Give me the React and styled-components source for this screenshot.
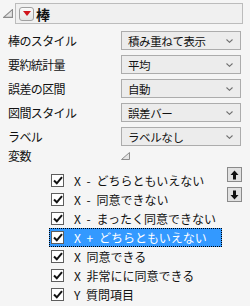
import React from "react";
import styled, { createGlobalStyle } from "styled-components";

const GlobalStyle = createGlobalStyle`
  body {
    margin: 0;
    background: #f5f5f5;
    font-family: "Noto Sans CJK JP", "Noto Sans", sans-serif;
    color: #111;
  }
`;

const Panel = styled.div`
  width: 250px;
  height: 306px;
  padding-top: 3px;
  box-sizing: border-box;
`;

const Header = styled.div`
  display: flex;
  align-items: center;
  padding-left: 3px;
`;

const HeaderBox = styled.div`
  display: flex;
  align-items: center;
  gap: 2px;
  margin-left: 2px;
  width: 228px;
  height: 21px;
  box-sizing: border-box;
  border: 1px solid #bcbcbc;
  background: #f0f0f0;
  padding-left: 3px;
`;

const RedButton = styled.div`
  display: flex;
  align-items: center;
  justify-content: center;
  width: 15px;
  height: 14px;
  box-sizing: border-box;
  border: 1px solid #a0a0a0;
  border-radius: 3px;
  background: linear-gradient(#fafafa, #e4e4e4);
`;

const Title = styled.span`
  font-size: 14px;
  font-weight: 700;
  line-height: 14px;
`;

const Form = styled.div`
  display: grid;
  grid-template-columns: 113px 120px;
  grid-auto-rows: 19px;
  row-gap: 5px;
  padding-left: 8px;
  margin-top: 7px;
  align-items: center;
  font-size: 12px;
`;

const Label = styled.span`
  font-size: 12px;
  letter-spacing: -0.6px;
  line-height: 16px;
`;

const Select = styled.div`
  display: flex;
  align-items: center;
  justify-content: space-between;
  height: 19px;
  box-sizing: border-box;
  border: 1px solid #acacac;
  background: #ececec;
  padding: 0 7px 0 6px;
  font-size: 11.5px;
  letter-spacing: -0.4px;
`;

const VarRow = styled.div`
  display: flex;
  align-items: center;
  height: 17px;
  padding-left: 8px;
  margin-top: 1px;
`;

const VarLabel = styled(Label)`
  width: 113px;
`;

const ListArea = styled.div`
  display: flex;
  align-items: flex-start;
  gap: 5px;
  padding-left: 49px;
  margin-top: 3px;
`;

const List = styled.div`
  display: flex;
  flex-direction: column;
  width: 173px;
  margin-top: 4px;
`;

const Item = styled.div`
  display: flex;
  align-items: center;
  gap: 10px;
  height: 19px;
  box-sizing: border-box;
  padding-left: 1px;
  font-size: 12px;
  word-spacing: 3px;
  white-space: nowrap;
  background: ${(p) => (p.$selected ? "#3399ff" : "transparent")};
  color: ${(p) => (p.$selected ? "#fff" : "#111")};
  border: 1px dotted ${(p) => (p.$selected ? "#000" : "transparent")};
`;

const Check = styled.div`
  display: flex;
  align-items: center;
  justify-content: center;
  width: 13px;
  height: 13px;
  box-sizing: border-box;
  border: 1px solid #5e5e5e;
  background: #fff;
  flex-shrink: 0;
`;

const Buttons = styled.div`
  display: flex;
  flex-direction: column;
  gap: 5px;
`;

const MoveButton = styled.div`
  display: flex;
  align-items: center;
  justify-content: center;
  width: 15px;
  height: 15px;
  box-sizing: border-box;
  border: 1px solid #8a8a8a;
  background: #e1e1e1;
`;

const Corner = ({ size = 9 }) => (
  <svg width={size} height={size - 1} viewBox="0 0 9 8">
    <path d="M0.5 7.5 L8.5 0.5 L8.5 7.5 Z" fill="#e4e4e4" stroke="#8c8c8c" strokeWidth="1" />
  </svg>
);

const Chevron = () => (
  <svg width="7" height="4" viewBox="0 0 7 4">
    <path d="M0.5 0.5 L3.5 3.3 L6.5 0.5" fill="none" stroke="#707070" strokeWidth="1.1" />
  </svg>
);

const Tick = () => (
  <svg width="10" height="9" viewBox="0 0 10 9">
    <path d="M1 4.5 L3.8 7.3 L9 1.2" fill="none" stroke="#111" strokeWidth="2" />
  </svg>
);

const Arrow = ({ down }) => (
  <svg width="9" height="10" viewBox="0 0 9 10" style={down ? { transform: "rotate(180deg)" } : undefined}>
    <path d="M4.5 0.5 L8.5 5 L6 5 L6 9.5 L3 9.5 L3 5 L0.5 5 Z" fill="#111" />
  </svg>
);

const fields = [
  ["棒のスタイル", "積み重ねて表示"],
  ["要約統計量", "平均"],
  ["誤差の区間", "自動"],
  ["図間スタイル", "誤差バー"],
  ["ラベル", "ラベルなし"],
];

const items = [
  "X - どちらともいえない",
  "X - 同意できない",
  "X - まったく同意できない",
  "X + どちらともいえない",
  "X 同意できる",
  "X 非常にに同意できる",
  "Y 質問項目",
];

export default function App() {
  return (
    <>
      <GlobalStyle />
      <Panel>
        <Header>
          <Corner size={10} />
          <HeaderBox>
            <RedButton>
              <svg width="8" height="5" viewBox="0 0 8 5">
                <path d="M0 0 L8 0 L4 5 Z" fill="#d0141c" />
              </svg>
            </RedButton>
            <Title>棒</Title>
          </HeaderBox>
        </Header>

        <Form>
          {fields.map(([label, value]) => (
            <React.Fragment key={label}>
              <Label>{label}</Label>
              <Select>
                <span>{value}</span>
                <Chevron />
              </Select>
            </React.Fragment>
          ))}
        </Form>

        <VarRow>
          <VarLabel>変数</VarLabel>
          <Corner />
        </VarRow>

        <ListArea>
          <List>
            {items.map((text, i) => (
              <Item key={text} $selected={i === 3}>
                <Check>
                  <Tick />
                </Check>
                <span>{text}</span>
              </Item>
            ))}
          </List>
          <Buttons>
            <MoveButton>
              <Arrow />
            </MoveButton>
            <MoveButton>
              <Arrow down />
            </MoveButton>
          </Buttons>
        </ListArea>
      </Panel>
    </>
  );
}
